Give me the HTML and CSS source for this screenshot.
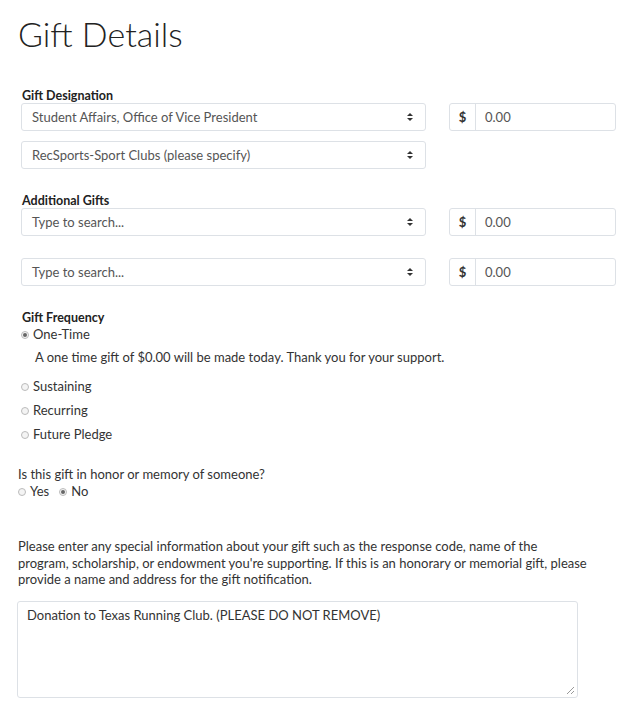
FILE: index.html
```html
<!DOCTYPE html>
<html lang="en">

<head>
    <meta charset="UTF-8">
    <meta name="viewport" content="width=device-width, initial-scale=1.0">
    <title>Gift Details</title>
    <link rel="stylesheet" href="styles.css">
</head>

<body>
    <main>
        <h1>Gift Details</h1>

        <section class="group">
            <h3>Gift Designation</h3>
            <div class="row">
                <div class="select">Student Affairs, Office of Vice President</div>
                <div class="amount"><span class="addon">$</span><span class="value">0.00</span></div>
            </div>
            <div class="row">
                <div class="select">RecSports-Sport Clubs (please specify)</div>
            </div>
        </section>

        <section class="group">
            <h3>Additional Gifts</h3>
            <div class="row">
                <div class="select">Type to search...</div>
                <div class="amount"><span class="addon">$</span><span class="value">0.00</span></div>
            </div>
            <div class="row spaced">
                <div class="select">Type to search...</div>
                <div class="amount"><span class="addon">$</span><span class="value">0.00</span></div>
            </div>
        </section>

        <section class="group frequency">
            <h3>Gift Frequency</h3>
            <label class="radio"><span class="dot checked"></span>One-Time</label>
            <p class="note">A one time gift of $0.00 will be made today. Thank you for your support.</p>
            <label class="radio"><span class="dot"></span>Sustaining</label>
            <label class="radio"><span class="dot"></span>Recurring</label>
            <label class="radio"><span class="dot"></span>Future Pledge</label>
        </section>

        <section class="honor">
            <p>Is this gift in honor or memory of someone?</p>
            <div class="inline">
                <label class="radio"><span class="dot"></span>Yes</label>
                <label class="radio"><span class="dot checked"></span>No</label>
            </div>
        </section>

        <section class="special">
            <p>Please enter any special information about your gift such as the response code, name of the program, scholarship, or endowment you're supporting. If this is an honorary or memorial gift, please provide a name and address for the gift notification.</p>
            <div class="textarea">Donation to Texas Running Club. (PLEASE DO NOT REMOVE)<span class="grip"></span></div>
        </section>
    </main>
</body>

</html>
```

FILE: styles.css
```css
body {
    background-color: #fff;
    color: #333;
    font-family: Lato, "Liberation Sans", Arial, sans-serif;
    font-size: 13px;
    margin: 0;
    padding: 0;
}

main {
    padding: 0 18px;
}

h1 {
    font-weight: 300;
    font-size: 34px;
    margin: 0;
    padding-top: 12px;
    line-height: 44px;
    color: #222;
}

h3 {
    font-size: 12.5px;
    font-weight: 700;
    margin: 0 0 0 4px;
    line-height: 15px;
    color: #222;
}

.group {
    margin-top: 32px;
}

.group + .group {
    margin-top: 24px;
}

.row {
    display: flex;
    gap: 23px;
    margin-left: 3px;
    margin-bottom: 10px;
}

.row.spaced {
    margin-top: 22px;
}

.select {
    width: 393px;
    height: 26px;
    line-height: 26px;
    border: 1px solid #dde1e6;
    border-radius: 3px;
    padding-left: 10px;
    color: #555;
    position: relative;
}

.select::after {
    content: "";
    position: absolute;
    right: 12px;
    top: 9px;
    width: 0;
    height: 0;
    border-left: 3px solid transparent;
    border-right: 3px solid transparent;
    border-bottom: 3px solid #333;
}

.select::before {
    content: "";
    position: absolute;
    right: 12px;
    top: 14px;
    width: 0;
    height: 0;
    border-left: 3px solid transparent;
    border-right: 3px solid transparent;
    border-top: 3px solid #333;
}

.amount {
    display: flex;
    width: 165px;
    height: 26px;
    border: 1px solid #dde1e6;
    border-radius: 3px;
    line-height: 26px;
}

.amount .addon {
    width: 25px;
    text-align: center;
    border-right: 1px solid #dde1e6;
    color: #333;
    font-weight: 700;
}

.amount .value {
    padding-left: 9px;
    color: #555;
}

.group.frequency {
    margin-top: 24px;
}

.frequency h3 {
    margin-bottom: 1px;
}

.radio {
    display: flex;
    align-items: center;
    gap: 4px;
    margin-left: 3px;
    line-height: 17px;
    color: #333;
}

.frequency .radio + .radio {
    margin-top: 7px;
}

.dot {
    width: 6px;
    height: 6px;
    border: 1px solid #bbb;
    border-radius: 50%;
    background: #f4f4f4;
    position: relative;
}

.dot.checked::after {
    content: "";
    position: absolute;
    left: 1px;
    top: 1px;
    width: 4px;
    height: 4px;
    border-radius: 50%;
    background: #666;
}

.note {
    margin: 6px 0 12px 17px;
    line-height: 17px;
}

.honor {
    margin-top: 23px;
}

.honor p {
    margin: 0;
    line-height: 17px;
}

.inline {
    display: flex;
    gap: 10px;
}

.inline .radio {
    margin-left: 0;
}

.special {
    margin-top: 38px;
}

.special p {
    margin: 0;
    line-height: 16.5px;
    width: 570px;
}

.textarea {
    margin-top: 13px;
    width: 542px;
    height: 86px;
    border: 1px solid #dde1e6;
    border-radius: 3px;
    padding: 5px 8px 4px 9px;
    margin-left: -1px;
    position: relative;
    color: #333;
}

.grip {
    position: absolute;
    right: 3px;
    bottom: 3px;
    width: 7px;
    height: 7px;
    background: linear-gradient(135deg, transparent 45%, #999 45%, #999 55%, transparent 55%, transparent 75%, #999 75%, #999 85%, transparent 85%);
}
```
